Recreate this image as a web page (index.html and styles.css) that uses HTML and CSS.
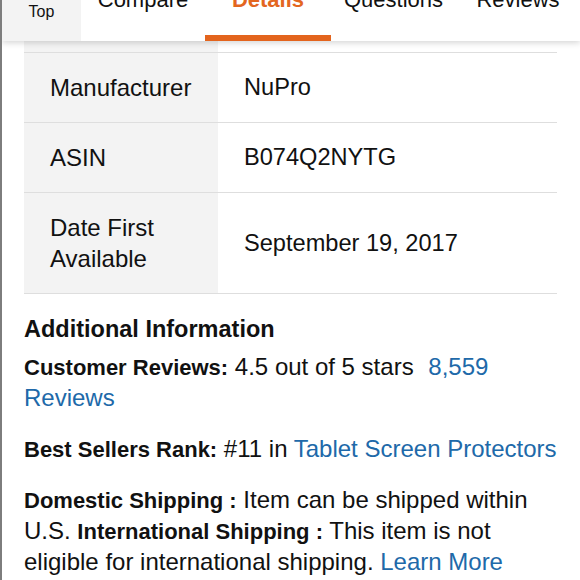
FILE: index.html
```html
<!DOCTYPE html>
<html lang="en">
<head>
<meta charset="utf-8">
<title>Product Details</title>
<link rel="stylesheet" href="styles.css">
</head>
<body>
<div class="page">
  <nav class="tabs">
    <div class="tab tab-top">Top</div>
    <div class="tab tab-compare"><span class="tab-label">Compare</span></div>
    <div class="tab tab-details tab-active"><span class="tab-label">Details</span></div>
    <div class="tab tab-questions"><span class="tab-label">Questions</span></div>
    <div class="tab tab-reviews"><span class="tab-label">Reviews</span></div>
  </nav>
  <main class="content">
    <div class="specs">
      <div class="row row-cut"><div class="key"></div><div class="val"></div></div>
      <div class="row"><div class="key">Manufacturer</div><div class="val">NuPro</div></div>
      <div class="row"><div class="key">ASIN</div><div class="val">B074Q2NYTG</div></div>
      <div class="row"><div class="key">Date First Available</div><div class="val">September 19, 2017</div></div>
    </div>
    <section class="info">
      <h2 class="info-title">Additional Information</h2>
      <p class="info-line"><b>Customer Reviews:</b> 4.5 out of 5 stars <a class="link link-gap" href="#">8,559 Reviews</a></p>
      <p class="info-line"><b>Best Sellers Rank:</b> #11 in <a class="link" href="#">Tablet Screen Protectors</a></p>
      <p class="info-line"><b>Domestic Shipping :</b> Item can be shipped within U.S. <b>International Shipping :</b> This item is not eligible for international shipping. <a class="link" href="#">Learn More</a></p>
    </section>
  </main>
</div>
</body>
</html>
```

FILE: styles.css
```css
html, body {
  margin: 0;
  padding: 0;
  background: #ffffff;
}

body {
  font-family: "Liberation Sans", Arial, sans-serif;
  color: #111111;
}

.page {
  border-left: 2px solid #7d7d7d;
  height: 580px;
  overflow: hidden;
  background: #ffffff;
}

.tabs {
  display: flex;
  height: 41px;
  position: relative;
  z-index: 2;
  background: #ffffff;
  box-shadow: 0 2px 6px rgba(0, 0, 0, 0.16);
}

.tab {
  flex: 0 0 auto;
  position: relative;
  text-align: center;
  font-size: 22px;
  line-height: 22px;
  color: #111111;
  white-space: nowrap;
}

.tab-label {
  display: block;
  margin-top: -11px;
}

.tab-top {
  width: 79px;
  background: #f3f3f3;
  font-size: 16px;
  line-height: 16px;
  padding-top: 4px;
  box-sizing: border-box;
}

.tab-compare { width: 124px; }
.tab-details { width: 126px; }
.tab-questions { width: 125px; }
.tab-reviews { width: 124px; }

.tab-active {
  color: #e3661f;
  font-weight: bold;
}

.tab-active::after {
  content: "";
  position: absolute;
  left: 0;
  right: 0;
  bottom: 0;
  height: 6px;
  background: #e3641d;
}

.content {
  padding: 0 23px 0 22px;
}

.specs {
  display: flex;
  flex-direction: column;
}

.row {
  display: grid;
  grid-template-columns: 194px 1fr;
  border-bottom: 1px solid #dedede;
  font-size: 24px;
  line-height: 31px;
}

.key {
  background: #f3f3f3;
  padding: 19px 26px;
}

.val {
  padding: 19px 26px;
  display: flex;
  align-items: center;
  font-size: 23.6px;
}

.row-cut .key,
.row-cut .val {
  padding: 0;
  height: 11px;
}

.info {
  padding-top: 20px;
}

.info-title {
  margin: 0 0 6px;
  font-size: 23.5px;
  line-height: 31px;
  font-weight: bold;
}

.info-line {
  margin: 0 0 20px;
  font-size: 24px;
  line-height: 31px;
}

.info-line b {
  font-size: 22px;
  line-height: 1;
}

.link {
  color: #2069a9;
  text-decoration: none;
}

.link-gap {
  margin-left: 8px;
}
```
